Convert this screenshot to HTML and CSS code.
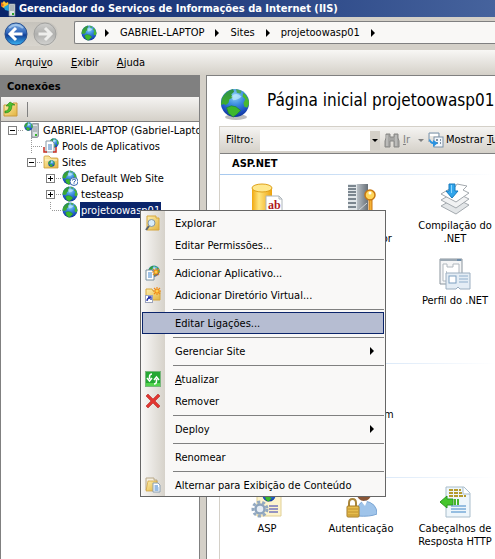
FILE: index.html
```html
<!DOCTYPE html>
<html lang="pt">
<head>
<meta charset="utf-8">
<title>Gerenciador do Serviços de Informações da Internet (IIS)</title>
<link rel="stylesheet" href="styles.css">
</head>
<body>
<svg class="defs" aria-hidden="true">
  <defs>
    <radialGradient id="sea" cx=".5" cy=".25" r=".8"><stop offset="0" stop-color="#8fd4f8"/><stop offset=".4" stop-color="#3b8ce0"/><stop offset=".75" stop-color="#1c4fc0"/><stop offset="1" stop-color="#0b2a8c"/></radialGradient>
    <linearGradient id="land" x1="0" y1="0" x2="0" y2="1"><stop offset="0" stop-color="#2f8f4a"/><stop offset="1" stop-color="#3fb02a"/></linearGradient>
    <linearGradient id="gold" x1="0" y1="0" x2="1" y2="0"><stop offset="0" stop-color="#f0a810"/><stop offset=".35" stop-color="#ffe680"/><stop offset="1" stop-color="#eda20c"/></linearGradient>
    <linearGradient id="folder" x1="0" y1="0" x2="1" y2="1"><stop offset="0" stop-color="#fdf0b0"/><stop offset="1" stop-color="#e3b33f"/></linearGradient>
    <linearGradient id="steel" x1="0" y1="0" x2="1" y2="0"><stop offset="0" stop-color="#b9c0c6"/><stop offset="1" stop-color="#676f77"/></linearGradient>
    <linearGradient id="backfill" x1="0" y1="0" x2="0" y2="1"><stop offset="0" stop-color="#7fb0e4"/><stop offset=".45" stop-color="#2f64ba"/><stop offset=".55" stop-color="#123f96"/><stop offset="1" stop-color="#38b6f6"/></linearGradient>
    <linearGradient id="fwdfill" x1="0" y1="0" x2="0" y2="1"><stop offset="0" stop-color="#cfcfcd"/><stop offset=".5" stop-color="#b0b0ae"/><stop offset="1" stop-color="#d2d2d0"/></linearGradient>
  </defs>
  <symbol id="globe" viewBox="0 0 32 32">
    <circle cx="16" cy="16" r="15" fill="url(#sea)"/>
    <path d="M2 11Q6 3 14 1L15 4 12 7 14 10 10 12 9 16 6 18 4 17 1 18Z" fill="url(#land)"/>
    <path d="M17 1 23 3 22 6 18 5Z" fill="#4aa85a"/>
    <path d="M25 5Q31 10 31 17L29 21 26 20 25 16 27 12 24 9Z" fill="#49b831"/>
    <path d="M7 21 12 19 17 20 22 24 18 28 14 31 9 27Z" fill="#3db82c" stroke="#1d7d35" stroke-width=".7"/>
    <path d="M12 9Q17 4 23 9 19 13 14 13Z" fill="#c8eeff" opacity=".65"/>
  </symbol>
  <symbol id="server" viewBox="0 0 16 16">
    <path d="M7 3 9 1H15V14L13 16H7Z" fill="#a4abb0"/><path d="M8 2H14V15H8Z" fill="#dfe4e7" stroke="#78828a" stroke-width=".7"/>
    <path d="M9 5H13M9 7H13M9 9H13" stroke="#89939a"/><rect x="11" y="12" width="2" height="2" fill="#35b52d"/>
    <use href="#globe" x="0" y="0" width="9" height="9"/>
  </symbol>
  <symbol id="closed-folder" viewBox="0 0 16 16">
    <path d="M1 3Q1 2 2 2H6L8 4H14Q15 4 15 5V14H1Z" fill="url(#folder)" stroke="#cd9b39" stroke-width=".8"/>
    <path d="M2 6H14" stroke="#fff7cf"/>
  </symbol>
  <symbol id="spark" viewBox="0 0 8 8"><path d="M4 0V8M0 4H8M1 1 7 7M7 1 1 7" stroke="#f08a16" stroke-width="1.200"/><circle cx="4" cy="4" r="1.500" fill="#ffd04a"/></symbol>
</svg>

<div class="window">
  <header class="titlebar">
    <svg width="16" height="16" viewBox="0 0 16 16" aria-hidden="true">
      <path d="M1 3 4 0 6 2 8 1 9 5 6 8 2 6Z" fill="#ffc52d"/><path d="M4 6 9 3V10L5 9Z" fill="#21a5e0"/><path d="M1 1 4 4 2 6 1 5Z" fill="#e46c20"/>
      <path d="M9 3H15V15H9Z" fill="#dce2e4" stroke="#808a8f" stroke-width=".7"/><path d="M10 5H14M10 7H14M10 9H14" stroke="#7f898f"/><rect x="12" y="12" width="2" height="2" fill="#2ba42c"/>
    </svg>
    <h1>Gerenciador do Serviços de Informações da Internet (IIS)</h1>
  </header>

  <nav class="navbar" aria-label="Navegação">
    <div class="history">
      <button type="button" aria-label="Voltar"><svg width="24" height="24" viewBox="0 0 24 24"><circle cx="12" cy="12" r="11" fill="url(#backfill)" stroke="#274f8e"/><path d="M5 6Q12 0 19 6" stroke="#c3dcf4" stroke-width="2" fill="none" opacity=".6"/><path d="M12 6 6 12 12 18M6.500 12H18.500" fill="none" stroke="#fff" stroke-width="3"/></svg></button>
      <button type="button" aria-label="Avançar"><svg width="24" height="24" viewBox="0 0 24 24"><circle cx="12" cy="12" r="11" fill="url(#fwdfill)" stroke="#a2a2a0"/><path d="M12 6 18 12 12 18M17.500 12H5.500" fill="none" stroke="#eeeeec" stroke-width="3"/></svg></button>
    </div>
    <div class="address">
      <svg class="address-icon" width="16" height="16" aria-hidden="true"><use href="#globe"/></svg>
      <i class="arrow"></i><a href="#">GABRIEL-LAPTOP</a>
      <i class="arrow"></i><a href="#">Sites</a>
      <i class="arrow"></i><a href="#">projetoowasp01</a>
      <i class="arrow"></i>
    </div>
  </nav>

  <div class="menubar">
    <button type="button">Arqui<u>v</u>o</button>
    <button type="button"><u>E</u>xibir</button>
    <button type="button"><u>A</u>juda</button>
  </div>

  <main class="panes">
    <aside class="connections">
      <h2>Conexões</h2>
      <div class="toolstrip">
        <button type="button" aria-label="Subir"><svg width="16" height="16" viewBox="0 0 16 16"><path d="M1 4H9L10 2H14V15H1Z" fill="url(#folder)" stroke="#c99a3c"/><path d="M2 10Q6 10 6 5H3L7 1 12 4H9Q9 12 2 12Z" fill="#4cc02e" stroke="#258116" stroke-width=".6"/></svg></button>
        <i class="divider"></i>
      </div>
      <ul class="tree">
        <li>
          <div class="row"><button type="button" class="toggle minus" aria-label="Recolher"></button><i class="dots"></i><svg width="16" height="16"><use href="#server"/></svg><a href="#">GABRIEL-LAPTOP (Gabriel-Laptop\Gabriel)</a></div>
          <ul>
            <li><div class="row"><i class="stem"></i><i class="dots"></i><svg width="16" height="16" viewBox="0 0 16 16"><use href="#globe" x="6" y="0" width="10" height="10"/><path d="M3 3H9L11 5V14H3Z" fill="#fff" stroke="#8797a5"/><path d="M5 7H9M5 9H9M5 11H9" stroke="#3e7cc0"/><path d="M1 9V14H4M13 9V14H10" stroke="#c92e22" stroke-width="1.500" fill="none"/></svg><a href="#">Pools de Aplicativos</a></div></li>
            <li>
              <div class="row"><button type="button" class="toggle minus" aria-label="Recolher"></button><i class="dots"></i><svg width="16" height="16"><use href="#closed-folder"/><use href="#globe" x="5" y="6" width="7" height="7"/></svg><a href="#">Sites</a></div>
              <ul>
                <li><div class="row"><button type="button" class="toggle plus" aria-label="Expandir"></button><i class="dots"></i><svg width="16" height="16" viewBox="0 0 16 16"><use href="#globe" width="15" height="15"/><circle cx="12" cy="11.500" r="4" fill="#fff" stroke="#3868b0"/><path d="M10.500 10.500Q10.500 9 12 9T13.500 10.500Q13.500 11 12 12V12.600M12 13.300V14.200" fill="none" stroke="#2456a8"/></svg><a href="#">Default Web Site</a></div></li>
                <li><div class="row"><button type="button" class="toggle plus" aria-label="Expandir"></button><i class="dots"></i><svg width="16" height="16"><use href="#globe"/></svg><a href="#">testeasp</a></div></li>
                <li><div class="row"><i class="stem last"></i><i class="dots"></i><svg width="16" height="16"><use href="#globe"/></svg><a href="#" class="selected">projetoowasp01</a></div></li>
              </ul>
            </li>
          </ul>
        </li>
      </ul>
    </aside>

    <section class="features">
      <div class="page-head">
        <svg width="32" height="32" viewBox="0 0 32 32" aria-hidden="true"><ellipse cx="17" cy="29" rx="11" ry="3" fill="#bdbdbd"/><use href="#globe" x="1" width="30" height="30"/></svg>
        <h2>Página inicial projetoowasp01</h2>
      </div>
      <div class="features-body">
        <div class="filterbar">
          <label for="filter">Filtro:</label>
          <input id="filter" type="text">
          <button type="button" class="drop" aria-label="Abrir lista"><i class="down"></i></button>
          <button type="button" class="go"><svg width="16" height="16" viewBox="0 0 16 16"><path d="M2 2H6V5H10V2H14V6L15 9V15H10V9H6V15H1V9L2 6Z" fill="#a5a5a3" stroke="#888886"/><path d="M3 3V14M12 3V14" stroke="#d0d0ce"/></svg><span><u>I</u>r</span></button>
          <i class="down faded"></i>
          <button type="button" class="show"><svg width="16" height="16" viewBox="0 0 16 16"><path d="M1 1H11V5M1 1V10" fill="none" stroke="#7893ad"/><path d="M2 2H10V4H2Z" fill="#fff"/><rect x="6" y="5" width="9" height="10" fill="#f2f6fa" stroke="#7c92a7"/><path d="M8 8H10M12 8H13M8 11H10M12 11H13" stroke="#8293a5" stroke-width="2"/><path d="M1 8Q2 12 5 12V15L10 11 5 8V10Q3 10 2 7Z" fill="#2a92df"/></svg><span>Mostrar <u>T</u>udo</span></button>
        </div>

        <section class="group">
          <h3>ASP.NET</h3>
          <div class="grid">
            <a href="#"><svg width="32" height="32" viewBox="0 0 32 32"><path d="M1 5V27Q1 31 11 31T21 27V5Z" fill="url(#gold)"/><ellipse cx="11" cy="5" rx="10" ry="4" fill="#ffe88e" stroke="#dfa11a"/><path d="M15 13H28L31 16V31H15Z" fill="#fff" stroke="#aeb6bb"/><path d="M28 13V16H31" fill="none" stroke="#aeb6bb"/><text x="17" y="26" class="ab">ab</text></svg><span>Cadeias de Conexão</span></a>
            <a href="#"><svg width="32" height="32" viewBox="0 0 32 32"><path d="M3 1H12V31H3Z" fill="#e1e6e9"/><path d="M3 3H11M3 6H11M3 9H11M3 12H11M3 16H11M3 20H11M3 24H11" stroke="#7b868f" stroke-width="2"/><path d="M12 1H23V31H12Z" fill="url(#steel)"/><path d="M14 27 22 20" stroke="#cfd5d9"/><circle cx="25" cy="12" r="5" fill="#ffd65a" stroke="#c87712" stroke-width="1.500"/><circle cx="25" cy="10" r="1.500" fill="#fff"/><path d="M24 17H27V31H24Z" fill="#f5b135" stroke="#c87712"/></svg><span>Chave do Computador</span></a>
            <a href="#"><svg width="32" height="32" viewBox="0 0 32 32"><g stroke="#a3a9ae" stroke-width="1"><path d="M2 23 16 15 30 22 17 31Z" fill="#e3e6e8"/><path d="M2 17 16 9 30 16 17 25Z" fill="#f1f2f3"/><path d="M2 11 12 5 16 4 18 1 28 3 24 7 30 10 17 19Z" fill="#fff"/></g><path d="M10 1H16V8H19L13 15 7 8H10Z" fill="#31a5eb" stroke="#187bbd"/><path d="M12.500 2V10" stroke="#8ed7ff"/></svg><span>Compilação do .NET</span></a>
            <a href="#" class="third"><svg width="32" height="32" viewBox="0 0 32 32"><path d="M1 1H23V26H1Z" fill="#f4f5f6" stroke="#8a949d"/><path d="M1 2H23" stroke="#9ba8b3" stroke-width="2"/><path d="M18 2H22" stroke="#3e6e9c"/><path d="M4 6H8V9H14V6H20V23H4Z" fill="#fff" stroke="#b0b7be"/><path d="M7 14H8M7 18H8" stroke="#8a949d"/><path d="M7 15H31V31H21L19 29 17 31H7Z" fill="#e4edf5" stroke="#9baec0"/><rect x="10" y="18" width="7" height="7" fill="#fff" stroke="#7c9fc0"/><path d="M20 18H29M20 21H29M20 24H29" stroke="#8faecb"/></svg><span>Perfil do .NET</span></a>
          </div>
        </section>
        <section class="group">
          <h3>FTP</h3>
          <div class="grid">
            <a href="#" class="second"><svg width="32" height="32" viewBox="0 0 32 32"><circle cx="16" cy="16" r="10" fill="#a9bfd3"/></svg><span>Hospedagem</span></a>
          </div>
        </section>
        <section class="group">
          <h3>IIS</h3>
          <div class="grid">
            <a href="#"><svg width="32" height="32" viewBox="0 0 32 32"><path d="M6 1H30V30H6Z" fill="#fdf4cd" stroke="#e0cf95"/><use href="#globe" x="11" y="2" width="14" height="14"/><path d="M18 20H27M18 23H27M18 26H27" stroke="#7476bd" stroke-width="1.500"/><circle cx="9" cy="23" r="7" fill="none" stroke="#93a9c1" stroke-width="3" stroke-dasharray="3 2"/><circle cx="9" cy="23" r="4.500" fill="#e6edf4" stroke="#8da4bd" stroke-width="2.500"/></svg><span>ASP</span></a>
            <a href="#"><svg width="32" height="32" viewBox="0 0 32 32"><circle cx="19" cy="8" r="7" fill="#8a5636"/><path d="M13 30Q11 16 20 15 32 17 32 28 25 31 13 30Z" fill="#9fc4ea" stroke="#7ba5d3"/><path d="M16 15 20 20 22 15Z" fill="#fff"/><path d="M4 21V17Q4 13 7.500 13T11 17V21" stroke="#a8853b" stroke-width="2" fill="none"/><rect x="2" y="20" width="12" height="11" rx="1" fill="#e6bd4f" stroke="#a57b25"/><path d="M3 23H13M3 26H13M3 29H13" stroke="#c0922f"/></svg><span>Autenticação</span></a>
            <a href="#"><svg width="32" height="32" viewBox="0 0 32 32"><path d="M7 1H25L31 7V31H7Z" fill="#eef6fb" stroke="#a9bdcb"/><path d="M24 1V8H31" fill="#fff" stroke="#a9bdcb"/><path d="M10 4H22M10 7H23M10 10H27" stroke="#b59a2d" stroke-width="2" stroke-dasharray="4 1"/><path d="M1 16 8 10V13H14V19H8V22Z" fill="#45c52c" stroke="#2b9821"/><path d="M16 13V19M19 13V19" stroke="#45b52c" stroke-width="2"/><path d="M12 20H27M12 23H27M12 26H27" stroke="#3f86c7"/></svg><span>Cabeçalhos de Resposta HTTP</span></a>
          </div>
        </section>
      </div>
    </section>
  </main>

  <div class="context" role="menu">
    <button type="button" role="menuitem"><svg width="16" height="16" viewBox="0 0 16 16"><path d="M2 1H11V3H14V15H2Z" fill="url(#folder)" stroke="#d6a63c"/><circle cx="6.500" cy="8" r="3.500" fill="#d8edfa" stroke="#8496a5"/><path d="M4 11 1 15" stroke="#5a6672" stroke-width="2"/></svg><span>Explorar</span></button>
    <button type="button" role="menuitem"><i class="noicon"></i><span>Editar Permissões...</span></button>
    <hr>
    <button type="button" role="menuitem"><svg width="16" height="16" viewBox="0 0 16 16"><use href="#globe" x="3" width="12" height="12"/><path d="M1 5H7L9 7V15H1Z" fill="#fff" stroke="#78909f"/><path d="M3 8H7M3 10H7M3 12H7" stroke="#3e83cc"/><use href="#spark" x="7" y="3" width="8" height="8"/></svg><span>Adicionar Aplicativo...</span></button>
    <button type="button" role="menuitem"><svg width="16" height="16" viewBox="0 0 16 16"><path d="M1 2H7L8 4H15V13H1Z" fill="url(#folder)" stroke="#d6a63c"/><use href="#spark" x="8" y="0" width="8" height="8"/><rect x=".5" y="8.500" width="7" height="7" fill="#fff" stroke="#9ca4bc"/><path d="M2 14Q2 11 5 11M3 10H6V13" stroke="#2433a8" stroke-width="1.300" fill="none"/></svg><span>Adicionar Diretório Virtual...</span></button>
    <hr>
    <button type="button" role="menuitem" class="active"><i class="noicon"></i><span>Editar Ligações...</span></button>
    <hr>
    <button type="button" role="menuitem"><i class="noicon"></i><span>Gerenciar Site</span><i class="arrow"></i></button>
    <hr>
    <button type="button" role="menuitem"><svg width="16" height="16" viewBox="0 0 16 16"><rect x=".5" y=".5" width="15" height="15" fill="#25a834" stroke="#78b67d"/><path d="M1 12H15V15H1Z" fill="#53d44e"/><path d="M7 3Q4.500 3 4.500 6V8M2 7 4.500 10 7 7M9 13Q11.500 13 11.500 10V8M9 9 11.500 6 14 9" stroke="#fff" stroke-width="1.500" fill="none"/></svg><span><u>A</u>tualizar</span></button>
    <button type="button" role="menuitem"><svg width="16" height="16" viewBox="0 0 16 16"><path d="M1 3 3 1 8 6 13 1 15 3 10 8 15 13 13 15 8 10 3 15 1 13 6 8Z" fill="#e23530" stroke="#b52a26" stroke-width=".6"/></svg><span>Remover</span></button>
    <hr>
    <button type="button" role="menuitem"><i class="noicon"></i><span>Deploy</span><i class="arrow"></i></button>
    <hr>
    <button type="button" role="menuitem"><i class="noicon"></i><span>Renomear</span></button>
    <hr>
    <button type="button" role="menuitem"><svg width="16" height="16" viewBox="0 0 16 16"><path d="M1 1H9V3H12V13H1Z" fill="#f5efdf" stroke="#b8a888"/><path d="M3 4H12V14H1Z" fill="url(#folder)" stroke="#cf9f3a" stroke-width=".7"/><path d="M8 6H13L15 8V15H8Z" fill="#fff" stroke="#8ba0b2"/><path d="M9.500 9H13M9.500 11H13.500M9.500 13H13.500" stroke="#2f79cc"/></svg><span>Alternar para Exibição de Conteúdo</span></button>
  </div>
</div>
</body>
</html>
```
FILE: styles.css
```css
* { box-sizing: border-box; }

body {
  margin: 0;
  overflow: hidden;
  color: #000;
  font: 11px/16px Tahoma, "DejaVu Sans Condensed", "Noto Sans", sans-serif;
}

h1, h2, h3, ul { margin: 0; padding: 0; font-size: inherit; }
ul { list-style: none; }
a { color: inherit; text-decoration: none; }
svg { flex: none; display: block; }
.defs { position: absolute; width: 0; height: 0; }

button {
  padding: 0;
  border: 0;
  background: none;
  color: inherit;
  font: inherit;
}

.window {
  position: relative;
  display: flex;
  flex-direction: column;
  height: 100vh;
  background: #d4d0c8;
  white-space: nowrap;
}

.titlebar {
  display: flex;
  align-items: center;
  gap: 3px;
  height: 17px;
  flex: none;
  background: linear-gradient(90deg, #0a246a, #46639d);
  color: #fff;
}

.navbar {
  display: flex;
  align-items: center;
  height: 33px;
  flex: none;
}

.history {
  display: flex;
  gap: 5px;
  width: 54px;
  margin: 0 16px 0 4px;
  border-radius: 12px;
  background: linear-gradient(#c6c3bc, #d8d5ce);
}

.address {
  display: flex;
  align-items: center;
  gap: 11px;
  flex: 1;
  height: 23px;
  margin-bottom: 2px;
  padding-left: 6px;
  border: 1px solid #808080;
  border-right: 0;
  border-radius: 2px 0 0 2px;
  background: #f9f8f6;
}

.address-icon { margin-right: -3px; }

.arrow {
  flex: none;
  width: 0;
  height: 0;
  border: solid transparent;
  border-width: 4px 0 4px 4px;
  border-left-color: #000;
}

.menubar {
  display: flex;
  align-items: center;
  gap: 18px;
  height: 25px;
  flex: none;
  padding-left: 15px;
  background: linear-gradient(#f8f7f5, #d4d0c8);
}

.panes {
  display: flex;
  gap: 6px;
  flex: 1;
  min-height: 0;
}

.connections {
  display: flex;
  flex-direction: column;
  width: 200px;
  flex: none;
  border: solid #808080;
  border-width: 0 1px;
  background: #fff;
}

.connections h2 {
  padding: 4px 6px 2px;
  background: #808080;
}

.toolstrip {
  display: flex;
  align-items: center;
  gap: 8px;
  height: 25px;
  padding-left: 2px;
  border-bottom: 1px solid #808080;
  background: linear-gradient(#f5f4f2, #d4d0c8);
}

.divider { width: 1px; height: 15px; background: #808080; }

.tree { padding-left: 7px; overflow: hidden; }
.tree ul { padding-left: 19px; }
.row { display: flex; align-items: center; height: 16px; }
.row a { margin-left: 2px; padding: 1px 1px 0; line-height: 15px; }
.row .selected { background: #0a246a; color: #fff; }

.toggle, .stem { flex: none; width: 9px; height: 9px; }

.toggle {
  border: 1px solid #808080;
  background: linear-gradient(#000, #000) center / 5px 1px no-repeat #fff;
}

.toggle.plus {
  background:
    linear-gradient(#000, #000) center / 5px 1px no-repeat,
    linear-gradient(#000, #000) center / 1px 5px no-repeat #fff;
}

.stem {
  height: 16px;
  background: repeating-linear-gradient(#999 0 1px, #fff 1px 2px) 4px 0 / 1px 100% no-repeat;
}

.stem.last { background-size: 1px 8px; }

.dots {
  flex: none;
  width: 7px;
  height: 1px;
  background: repeating-linear-gradient(90deg, #fff 0 1px, #999 1px 2px);
}

.stem + .dots { width: 11px; margin-left: -4px; }

.features {
  flex: 1;
  min-width: 0;
  display: flex;
  flex-direction: column;
  overflow: hidden;
  border: solid #808080;
  border-width: 1px 0 0 1px;
  background: #fff;
}

.page-head {
  display: flex;
  align-items: flex-start;
  gap: 16px;
  height: 50px;
  flex: none;
  padding: 12px 0 0 12px;
}

.page-head h2 { font-size: 17px; font-weight: 400; line-height: 24px; }

.features-body {
  flex: 1;
  margin-left: 12px;
  border-left: 1px solid #d4d0c8;
}

.filterbar {
  display: flex;
  align-items: center;
  height: 28px;
  padding-left: 6px;
  border: solid;
  border-width: 1px 0;
  border-color: #d4d0c8 #fff #808080;
  background: linear-gradient(#f5f4f2, #d4d0c8);
}

.filterbar label { flex: none; width: 34px; }

.filterbar input {
  width: 110px;
  height: 21px;
  flex: none;
  padding: 0 2px;
  border: 0;
  background: #fff;
  font: inherit;
}

.filterbar button { display: flex; align-items: center; gap: 3px; flex: none; }
.filterbar .drop { justify-content: center; width: 10px; height: 19px; background: #d4d0c8; }
.filterbar .go { margin: 0 8px 0 4px; color: #808080; }
.filterbar .show { gap: 2px; margin-left: 4px; }

.down {
  flex: none;
  width: 0;
  height: 0;
  border: solid transparent;
  border-width: 3px 3px 0;
  border-top-color: #000;
}

.down.faded { border-top-color: #808080; }

.group h3 { padding: 2px 0 0 12px; }

.group h3::after {
  content: "";
  display: block;
  height: 1px;
  margin: 2px 0 0 -12px;
  background: linear-gradient(90deg, #a6c8ee, #fff);
}

.grid {
  display: grid;
  grid-template-columns: repeat(3, 94px);
  padding: 8px 0 10px;
}

.grid a {
  display: flex;
  flex-direction: column;
  align-items: center;
  gap: 4px;
  height: 75px;
  padding: 0 6px;
  text-align: center;
  line-height: 13px;
  white-space: normal;
}

.grid .second { grid-column: 2; }
.grid .third { grid-column: 3; }

.ab { fill: #b01820; font: bold 12px "Liberation Serif", serif; }

.context {
  position: absolute;
  left: 140px;
  top: 210px;
  width: 246px;
  padding: 1px 1px 0;
  border: 1px solid #666;
  background: linear-gradient(90deg, #f9f8f7, #d6d2ca) 0 0 / 24px 100% no-repeat #f9f8f7;
}

.context button {
  display: flex;
  align-items: center;
  width: 100%;
  height: 22px;
  padding: 0 10px 0 3px;
}

.context span { flex: 1; margin-left: 14px; padding-top: 2px; text-align: left; }
.context .active { background: #b6bdd2; box-shadow: inset 0 0 0 1px #0a246a; }
.noicon { width: 16px; }

.context hr {
  height: 1px;
  margin: 3px 0 2px 31px;
  border: 0;
  background: #808080;
}
```
